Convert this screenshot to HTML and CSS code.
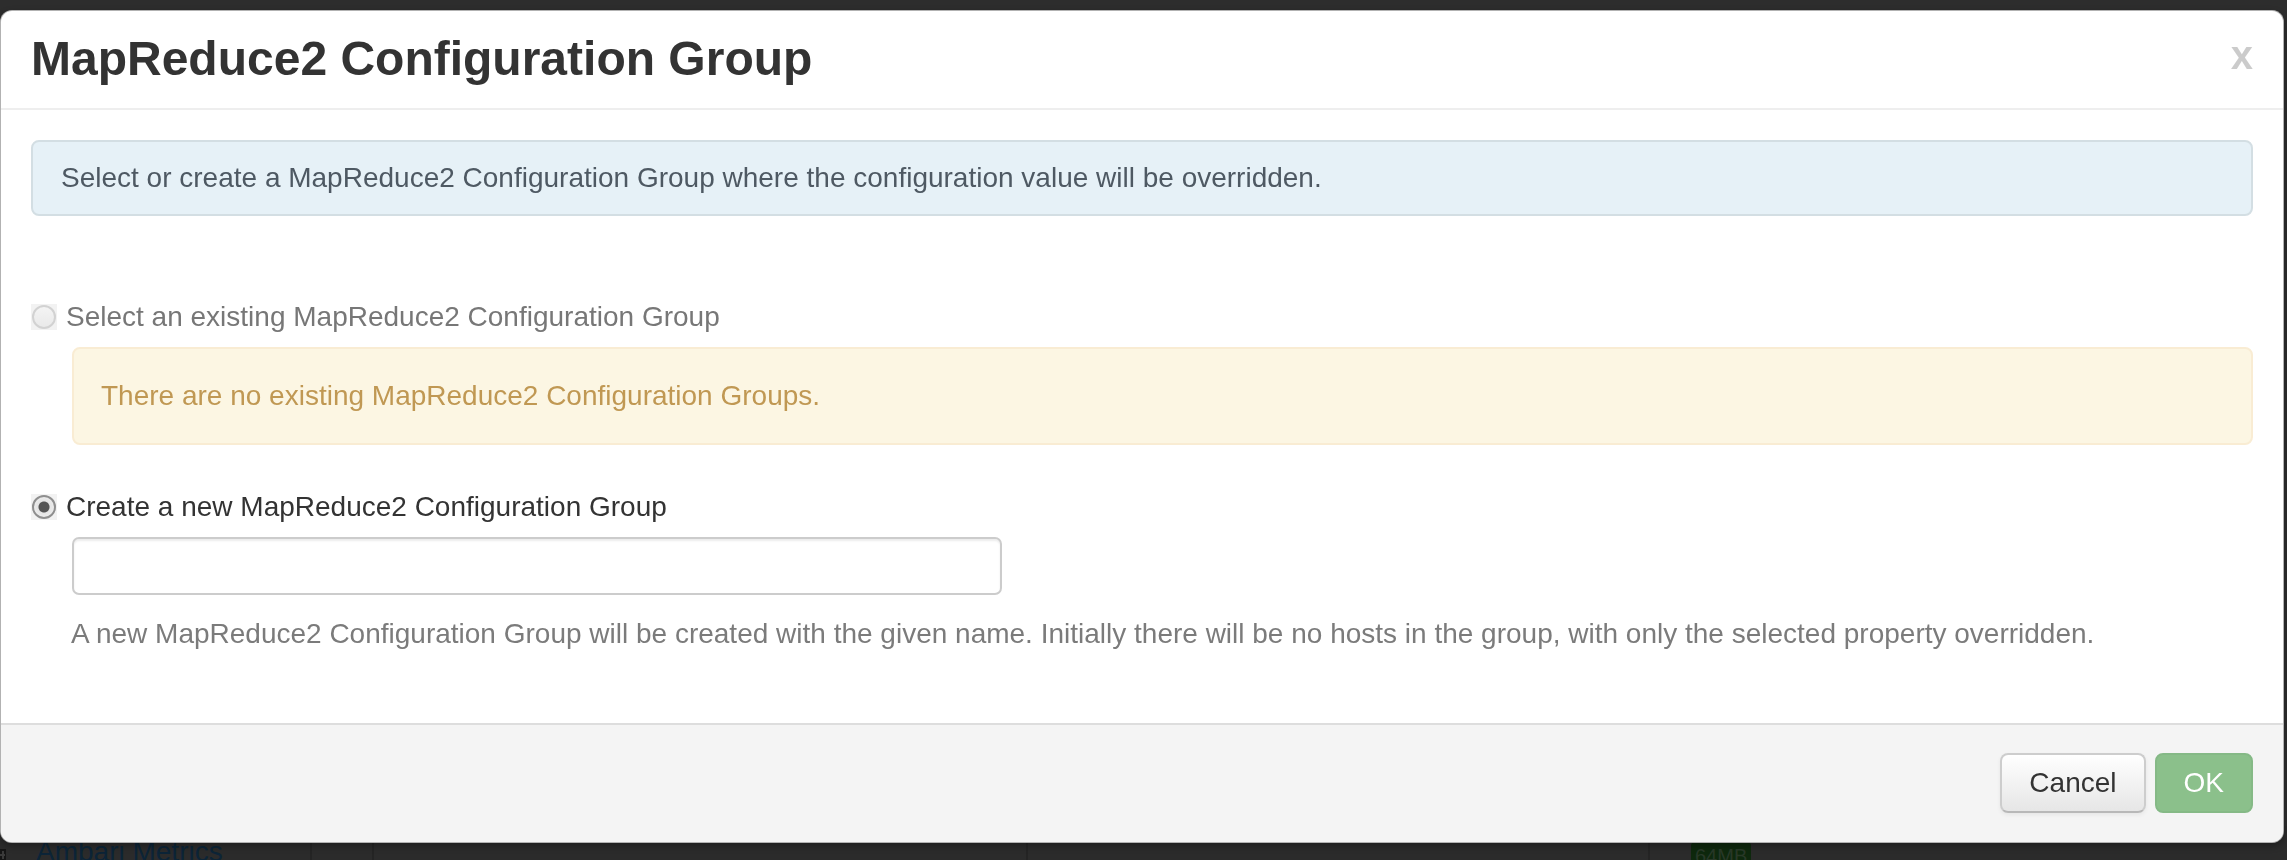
FILE: index.html
```html
<!DOCTYPE html>
<html lang="en">
<head>
<meta charset="utf-8">
<title>MapReduce2 Configuration Group</title>
<link rel="stylesheet" href="styles.css">
</head>
<body>
<div class="page">
  <div class="page-spacer"></div>
  <div class="service-row">
    <div class="cell cell-name">
      <svg class="expander" width="8" height="18" viewBox="0 0 8 18"><rect x="0" y="3" width="6" height="12" fill="#151515"/><rect x="0" y="8" width="5" height="2" fill="#3a3a3a"/><rect x="2" y="5" width="2" height="8" fill="#3a3a3a"/></svg>
      <span class="service-name">Ambari Metrics</span>
    </div>
    <div class="cell"></div>
    <div class="cell"></div>
    <div class="cell"></div>
    <div class="cell cell-badge"><span class="badge">64MB</span></div>
  </div>
</div>

<div class="modal">
  <div class="modal-header">
    <h3 class="modal-title">MapReduce2 Configuration Group</h3>
    <button class="close" type="button">x</button>
  </div>
  <div class="modal-body">
    <div class="alert alert-info">Select or create a MapReduce2 Configuration Group where the configuration value will be overridden.</div>
    <form class="group-form">
      <label class="radio radio-disabled"><span class="radio-box"><input type="radio" name="grp" disabled></span>Select an existing MapReduce2 Configuration Group</label>
      <div class="indent">
        <div class="alert alert-warning">There are no existing MapReduce2 Configuration Groups.</div>
      </div>
      <label class="radio"><span class="radio-box"><input type="radio" name="grp" checked></span>Create a new MapReduce2 Configuration Group</label>
      <div class="indent">
        <input type="text" class="name-input">
        <p class="help-block">A new MapReduce2 Configuration Group will be created with the given name. Initially there will be no hosts in the group, with only the selected property overridden.</p>
      </div>
    </form>
  </div>
  <div class="modal-footer">
    <button class="btn btn-default" type="button">Cancel</button>
    <button class="btn btn-success" type="button" disabled>OK</button>
  </div>
</div>
</body>
</html>
```
FILE: styles.css
```css
* { box-sizing: border-box; }

html, body {
  margin: 0;
  padding: 0;
  height: 860px;
  overflow: hidden;
}

body {
  background: #2d2d2d;
  font-family: "Liberation Sans", Arial, sans-serif;
  font-size: 28px;
  line-height: 40px;
  color: #333;
}

/* dimmed page behind the modal */
.page {
  display: flex;
  flex-direction: column;
}
.page-spacer { height: 826px; }

.service-row {
  display: grid;
  grid-template-columns: 310px 62px 654px 622px 1fr;
  height: 60px;
  background: #2b2b2b;
}
.cell {
  border-left: 2px solid #242424;
  display: flex;
  align-items: flex-start;
  padding-top: 6px;
}
.cell-name {
  border-left: 0;
  gap: 28px;
}
.expander { margin-top: 14px; flex: none; }
.service-name {
  color: #0c2437;
  font-size: 28px;
  line-height: 40px;
}
.cell-badge { padding-left: 41px; padding-top: 16px; }
.badge {
  background: #0e280d;
  color: #283828;
  font-size: 20px;
  line-height: 28px;
  padding: 0 4px;
  border-radius: 4px;
}

/* modal */
.modal {
  position: fixed;
  top: 10px;
  left: 0;
  width: 2284px;
  background: #fff;
  border: 1px solid rgba(0, 0, 0, 0.3);
  border-radius: 12px;
  box-shadow: 0 3px 7px rgba(0, 0, 0, 0.3);
  overflow: hidden;
}

.modal-header {
  display: flex;
  justify-content: space-between;
  align-items: flex-start;
  padding: 18px 30px 19px 30px;
  border-bottom: 2px solid #eee;
}
.modal-title {
  margin: 0;
  font-size: 48px;
  line-height: 60px;
  font-weight: bold;
  color: #333;
}
.close {
  margin-top: 6px;
  padding: 0;
  border: 0;
  background: none;
  font-family: "Liberation Sans", Arial, sans-serif;
  font-size: 40px;
  line-height: 40px;
  font-weight: bold;
  color: #000;
  opacity: 0.2;
}

.modal-body {
  padding: 30px 30px 30px 30px;
}

.alert {
  border: 2px solid transparent;
  border-radius: 8px;
  padding: 16px 70px 16px 28px;
}
.alert-info {
  background: #e6f1f7;
  border-color: #d3dee3;
  color: #4e5963;
  margin-bottom: 40px;
}
.alert-warning {
  background: #fcf6e3;
  border-color: #f9ecd3;
  color: #c09853;
  padding-top: 27px;
  padding-bottom: 27px;
  padding-left: 27px;
  margin-bottom: 42px;
}

.group-form {
  margin: 0;
  padding-top: 41px;
}

.radio {
  display: flex;
  align-items: center;
  gap: 9px;
  height: 40px;
  margin-bottom: 10px;
  color: #333;
}
.radio-disabled { color: #777; }

.radio-box {
  width: 26px;
  height: 26px;
  background: #f2f2f2;
  display: flex;
  align-items: center;
  justify-content: center;
  flex: none;
}
.radio-box input {
  -webkit-appearance: none;
  appearance: none;
  margin: 0;
  width: 24px;
  height: 24px;
  border-radius: 50%;
  border: 2px solid #8f8f8f;
  background: radial-gradient(circle, #555 0 5px, #e4e4e4 6px, #f3f3f3 100%);
}
.radio-box input:disabled {
  border-color: #d2d2d2;
  background: linear-gradient(#f4f4f4, #e9e9e9);
}

.indent { margin-left: 41px; }

.name-input {
  display: block;
  width: 930px;
  height: 58px;
  margin: 0 0 19px 0;
  padding: 8px 12px;
  border: 2px solid #ccc;
  border-radius: 7px;
  background: #fff;
  box-shadow: inset 0 2px 2px rgba(0, 0, 0, 0.075);
  font-family: "Liberation Sans", Arial, sans-serif;
  font-size: 28px;
}

.help-block {
  margin: 0 0 39px -1px;
  color: #7b7b7b;
  line-height: 40px;
}

.modal-footer {
  display: flex;
  justify-content: flex-end;
  gap: 9px;
  padding: 28px 30px 29px;
  background: #f4f4f4;
  border-top: 2px solid #ddd;
}

.btn {
  font-family: "Liberation Sans", Arial, sans-serif;
  font-size: 28px;
  line-height: 40px;
  padding: 8px 27px;
  border: 2px solid #c8c8c8;
  border-radius: 8px;
  cursor: pointer;
}
.btn-default {
  color: #333;
  background: linear-gradient(#ffffff, #e6e6e6);
  border-color: #cdcdcd #cdcdcd #b8b8b8;
  box-shadow: inset 0 2px 0 rgba(255, 255, 255, 0.2), 0 2px 4px rgba(0, 0, 0, 0.06);
}
.btn-success {
  color: #fff;
  background: #8bc08b;
  border-color: #85b986;
}
```
